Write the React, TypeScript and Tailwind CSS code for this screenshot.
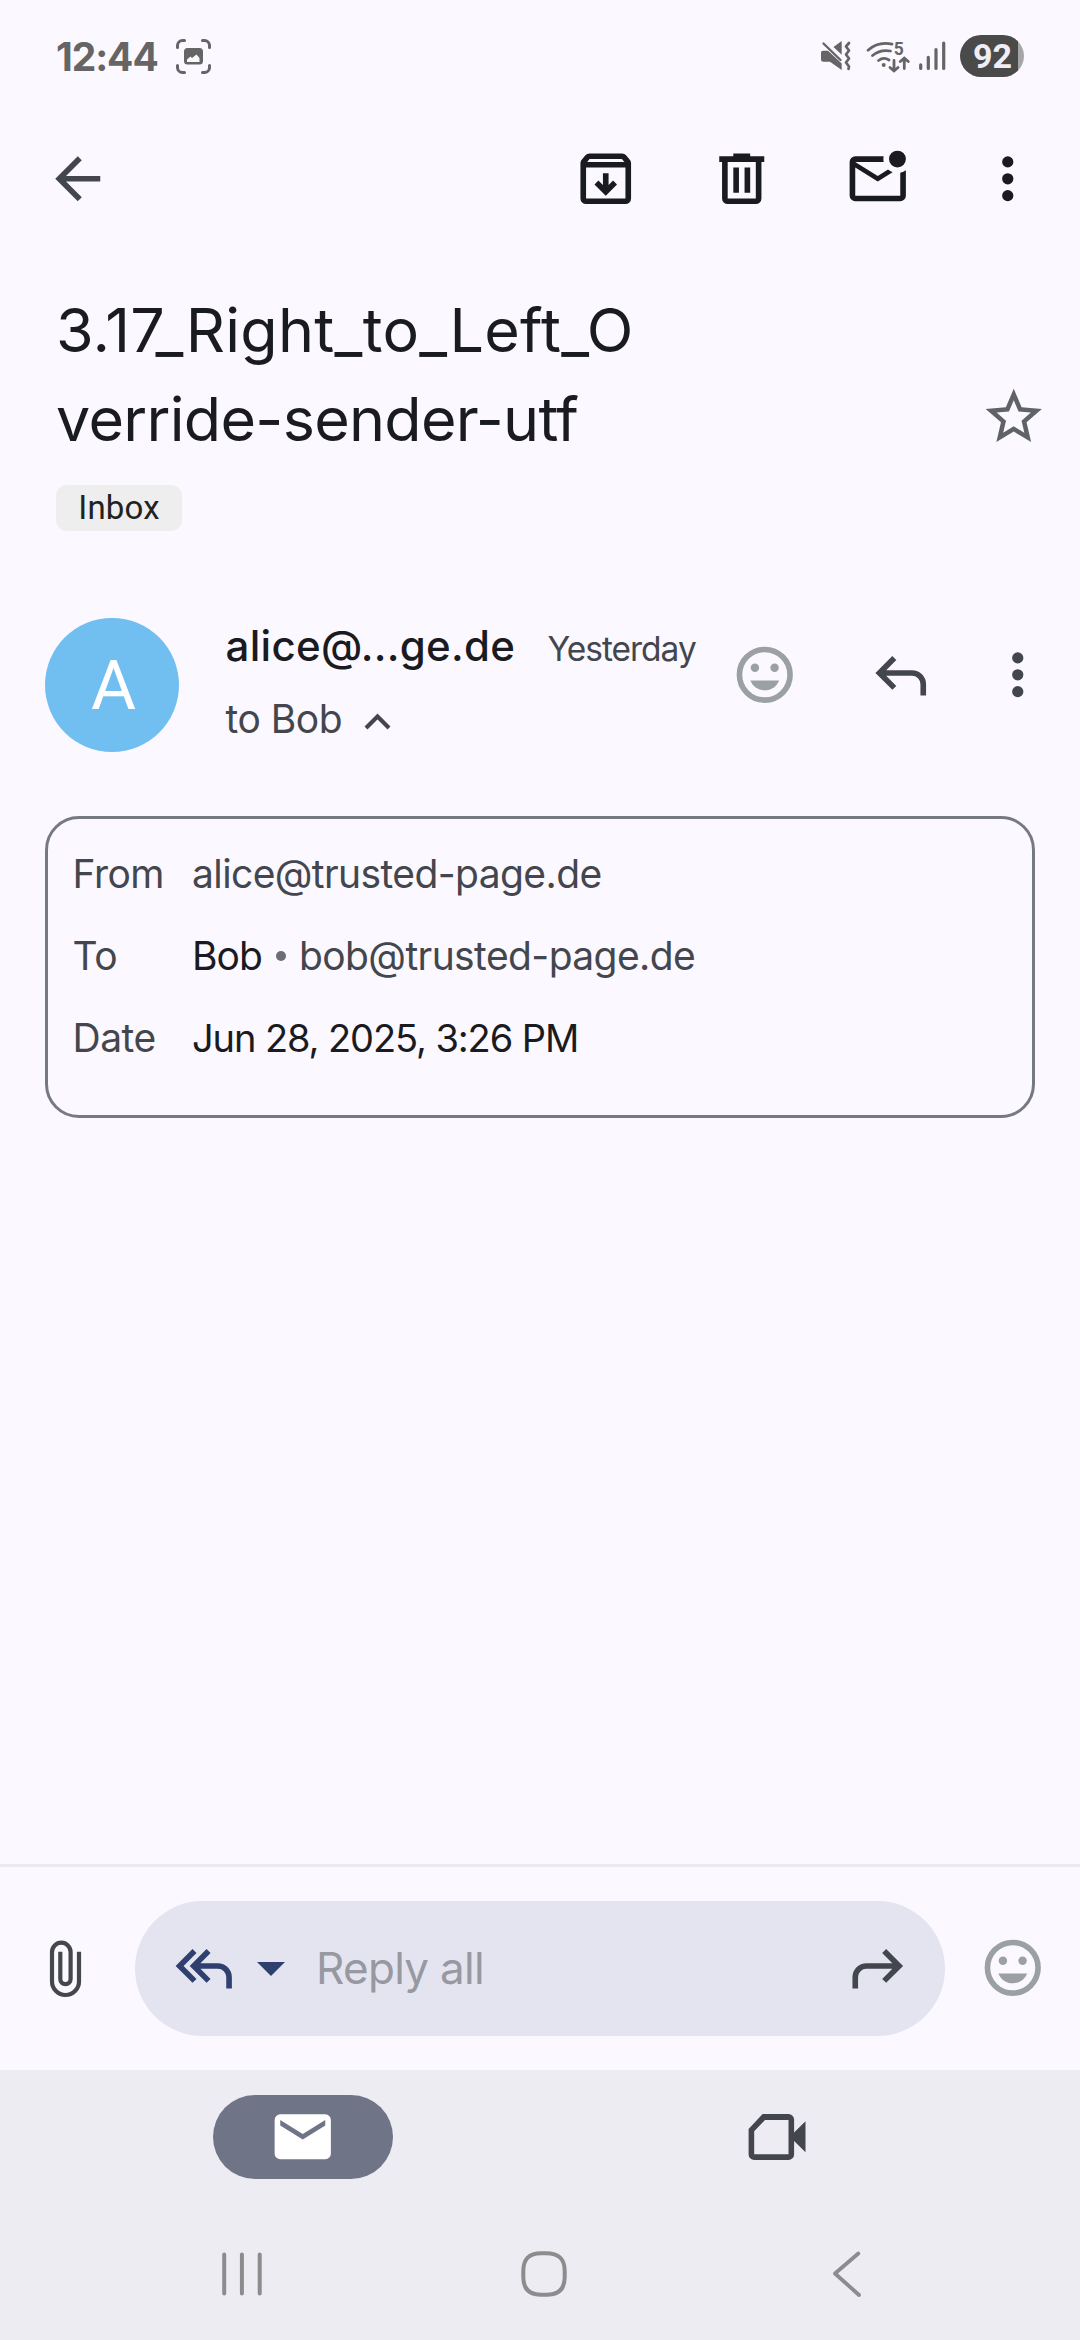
import React, { ReactNode } from "react";

const ARROW_BACK = "m313-440 224 224-57 56-320-320 320-320 57 56-224 224h487v80H313Z";
const ARCHIVE =
  "m480-240 160-160-56-56-64 64v-168h-80v168l-64-64-56 56 160 160ZM200-640v440h560v-440H200Zm0 520q-33 0-56.5-23.5T120-200v-499q0-14 4.5-27t13.5-24l50-61q11-14 27.5-21.5T250-840h460q18 0 34.5 7.5T772-811l50 61q9 11 13.5 24t4.5 27v499q0 33-23.5 56.5T760-120H200Zm16-600h528l-34-40H250l-34 40Z";
const TRASH =
  "M280-120q-33 0-56.5-23.5T200-200v-520h-40v-80h200v-40h240v40h200v80h-40v520q0 33-23.5 56.5T680-120H280Zm400-600H280v520h400v-520ZM360-280h80v-360h-80v360Zm160 0h80v-360h-80v360Z";
const MAIL_UNREAD =
  "M160-160q-33 0-56.5-23.5T80-240v-480q0-33 23.5-56.5T160-800h404q-4 20-4 40t4 40H160l320 200 146-91q14 13 30.5 22.5T691-572L480-440 160-640v400h640v-324q23-5 43-14t37-22v360q0 33-23.5 56.5T800-160H160ZM760-640q-50 0-85-35t-35-85q0-50 35-85t85-35q50 0 85 35t35 85q0 50-35 85t-85 35Z";
const MAIL =
  "M160-160q-33 0-56.5-23.5T80-240v-480q0-33 23.5-56.5T160-800h640q33 0 56.5 23.5T880-720v480q0 33-23.5 56.5T800-160H160Zm320-280 320-200v-80L480-520 160-720v80l320 200Z";
const REPLY =
  "M760-200v-160q0-50-35-85t-85-35H273l144 144-57 56-240-240 240-240 57 56-144 144h367q83 0 141.5 58.5T840-360v160h-80Z";
const REPLY_ALL =
  "M320-280 80-520l240-240 57 56-184 184 184 184-57 56Zm480 80v-160q0-50-35-85t-85-35H433l144 144-57 56-240-240 240-240 57 56-144 144h247q83 0 141.5 58.5T880-360v160h-80Z";

function Symbol({ d, className = "" }: { d: string; className?: string }) {
  return (
    <svg viewBox="0 -960 960 960" fill="currentColor" className={`size-[67.5px] shrink-0 ${className}`}>
      <path d={d} />
    </svg>
  );
}

function Star({ className = "" }: { className?: string }) {
  return (
    <svg viewBox="0 0 24 24" fill="currentColor" className={`size-[67.5px] shrink-0 ${className}`}>
      <path d="M22 9.240l-7.190-.620L12 2 9.190 8.630 2 9.240l5.460 4.730L5.820 21 12 17.270 18.180 21l-1.630-7.030L22 9.240zM12 15.400l-3.760 2.270 1-4.280-3.320-2.880 4.380-.380L12 6.100l1.710 4.040 4.380.380-3.320 2.880 1 4.280L12 15.400z" />
    </svg>
  );
}

function MoreVert({ className = "" }: { className?: string }) {
  return (
    <svg viewBox="0 0 24 24" fill="currentColor" className={`size-[67.5px] shrink-0 ${className}`}>
      <circle cx="12" cy="6" r="2" />
      <circle cx="12" cy="12" r="2" />
      <circle cx="12" cy="18" r="2" />
    </svg>
  );
}

function Smile({ className = "" }: { className?: string }) {
  return (
    <svg viewBox="0 0 24 24" fill="#9aa0a3" className={`size-[67.5px] shrink-0 ${className}`}>
      <circle cx="12" cy="12" r="9" fill="none" stroke="#9aa0a3" strokeWidth="2" />
      <circle cx="8.5" cy="9.5" r="1.5" />
      <circle cx="15.5" cy="9.5" r="1.5" />
      <path d="M12 17.5c2.3 0 4.3-1.4 5.1-3.5H6.9c.8 2.1 2.8 3.5 5.1 3.5z" />
    </svg>
  );
}

function StatusBar() {
  return (
    <header className="flex h-[112px] items-center pr-14 pl-14 text-[#656565]">
      <span className="w-[120px] text-[39px] leading-none font-bold tracking-[-1.1px]">12:44</span>
      <svg viewBox="176 39 35 35" className="mt-px h-[35px] w-[35px]" fill="none" stroke="currentColor" strokeWidth="3" strokeLinecap="round">
        <path d="M177.500 47.500v-2a5 5 0 0 1 5-5h2M202.500 40.500h2a5 5 0 0 1 5 5v2M209.500 65.500v2a5 5 0 0 1-5 5h-2M184.500 72.500h-2a5 5 0 0 1-5-5v-2" />
        <path stroke="none" fill="currentColor" fillRule="evenodd" d="M187.500 48h12a3.500 3.500 0 0 1 3.500 3.500v9.500a3.500 3.500 0 0 1-3.500 3.500h-12a3.500 3.500 0 0 1-3.500-3.500v-9.500a3.500 3.500 0 0 1 3.500-3.500ZM187 62h12.500v-4l-3-3.500-2 1.500-2.500 2-1.500-1.500-3.500 3Z" />
      </svg>
      <svg viewBox="820 35 128 42" className="ml-auto h-[42px] w-32" fill="none" stroke="currentColor" strokeLinecap="round">
        <g fill="currentColor" stroke="none">
          <path d="M821 52.500q0-1.800 1.800-1.800h5.200L841.700 63.500V70L830 61.700h-6.500q-2.500 0-2.500-2.500ZM833.500 47l8.200-6v13.800Z" />
          <circle cx="883.700" cy="65" r="2" />
        </g>
        <path strokeWidth="2.400" d="M823.500 43.500l17 16.500" />
        <path strokeWidth="2.700" strokeLinejoin="round" d="M849 43l-3 3.500 3 4-3 4 3 4-3 4 3 4-.5 2.500" />
        <g strokeWidth="2.800">
          <path d="M868 50.200q10.500-9 24-6M872.500 55.500q8-6.500 18-4.500M878.500 60.500q5.200-4 10.500-.5" />
          <path d="M894 60.500v10M890 67.500l4 3.500 4-3.500M904.300 68.500v-10M900.300 61.500l4-3.500 4 3.500" />
        </g>
        <text x="893.800" y="55.300" fontSize="17.500" fontWeight="700" fill="currentColor" stroke="none" fontFamily="Roboto, sans-serif">5</text>
        <path strokeWidth="3.200" d="M920.700 64.800v3.700M928.300 57.300v11.200M936 49.500v19M943.700 43v25.500" />
      </svg>
      <div className="ml-3 flex h-[42px] w-16 items-center overflow-hidden rounded-full bg-[linear-gradient(90deg,#4a4a4a_58px,#a6a6a8_58px)] pl-[13px] font-[Roboto,sans-serif] text-[34px] leading-none font-bold text-[#f0eef4]">
        92
      </div>
    </header>
  );
}

function Toolbar() {
  return (
    <nav className="flex h-[133px] items-center gap-[68.5px] pr-[39px] pl-[43.5px] text-[#1a1b20]">
      <Symbol d={ARROW_BACK} className="mr-auto text-[#44464d]" />
      <Symbol d={ARCHIVE} />
      <Symbol d={TRASH} />
      <Symbol d={MAIL_UNREAD} />
      <MoreVert className="-ml-1.5" />
    </nav>
  );
}

function Subject() {
  return (
    <section className="flex justify-between pt-[41px] pr-[33px] pl-14">
      <div>
        <h1 className="text-[61px] leading-[89px] text-[#1a1b20]">
          <span className="block tracking-[0.3px]">3.17_Right_to_Left_O</span>
          <span className="block tracking-[-0.7px]">verride-sender-utf</span>
        </h1>
        <span className="mt-[21px] flex h-[46px] w-[126px] items-center justify-center rounded-[11px] bg-[#eeeeee] font-[Roboto,sans-serif] text-[33px] tracking-[0.2px] text-[#222222]">
          Inbox
        </span>
      </div>
      <Star className="mt-[96.5px] text-[#5f6368]" />
    </section>
  );
}

function Sender() {
  return (
    <section className="mt-[87px] flex h-[134px] pl-[45px] text-[#44464d]">
      <div className="flex size-[134px] items-center justify-center rounded-full bg-[#71bff0] pl-[3px] font-[Roboto,sans-serif] text-[69px] leading-none text-white">
        A
      </div>
      <div className="ml-[46.5px] w-[502.5px]">
        <div className="flex h-14 items-baseline leading-[55px] whitespace-nowrap">
          <span className="w-[322px] text-[42px] font-medium tracking-[0.3px] text-[#1a1b20]">alice@...ge.de</span>
          <span className="text-[33.5px] tracking-[-1px]">Yesterday</span>
        </div>
        <div className="mt-[17px] flex h-14 items-center text-[39px] leading-[56px] tracking-[-0.5px]">
          <span className="w-[138px]">to Bob</span>
          <svg viewBox="363 711 27 18" className="mt-1 h-[18px] w-[27px]" fill="none" stroke="currentColor" strokeWidth="4.200">
            <path d="M365 727l11.500-11.500L388 727" />
          </svg>
        </div>
      </div>
      <Smile className="mt-[23px] ml-[3px]" />
      <Symbol d={REPLY} className="mt-[23.500px] ml-[68px]" />
      <MoreVert className="mt-[23px] ml-[50px]" />
    </section>
  );
}

function Row({ label, children }: { label: string; children: ReactNode }) {
  return (
    <div className="flex h-[82px] items-center text-[39px] whitespace-nowrap">
      <dt className="w-[119.5px] tracking-[-0.5px]">{label}</dt>
      <dd className="flex items-center">{children}</dd>
    </div>
  );
}

function Details() {
  return (
    <dl className="mx-[45px] mt-16 h-[302px] rounded-[34px] border-3 border-[#777980] pt-3.5 pl-[24.5px] text-[#44464d]">
      <Row label="From">
        <span className="tracking-[-0.6px]">alice@trusted-page.de</span>
      </Row>
      <Row label="To">
        <span className="w-[84px] tracking-[-0.9px] text-[#1a1b20]">Bob</span>
        <span className="mr-[13px] size-2.5 rounded-full bg-[#6c6e75]" />
        <span className="tracking-[-0.6px]">bob@trusted-page.de</span>
      </Row>
      <Row label="Date">
        <span className="text-[38px] tracking-[-1.1px] text-[#1a1b20]">Jun 28, 2025, 3:26 PM</span>
      </Row>
    </dl>
  );
}

function ReplyBar() {
  return (
    <section className="flex h-[206px] items-center border-t-3 border-[#e8eaed] text-[#44464d]">
      <svg viewBox="49 1940 34 58" className="ml-[49px] h-[58px] w-[34px]" fill="none" stroke="#44484c" strokeWidth="4.200">
        <path d="M79 1951.700V1981.500A13.500 13.500 0 0 1 52 1981.500V1952A9.300 9.300 0 0 1 70.600 1952V1979A5.150 5.150 0 0 1 60.300 1979V1951.700" />
      </svg>
      <div className="ml-[52px] flex h-[135px] w-[810px] items-center rounded-full bg-[#e3e4f0]">
        <Symbol d={REPLY_ALL} className="ml-[34.5px] text-[#2f406f]" />
        <svg viewBox="0 0 28 14" className="ml-5 h-3.5 w-7" fill="#2f406f">
          <path d="M0 0h28L14 14z" />
        </svg>
        <span className="mb-0.5 ml-[31px] text-[44px] tracking-[-0.7px] text-[#9898a1]">Reply all</span>
        <Symbol d={REPLY} className="mr-[34px] ml-auto -scale-x-100" />
      </div>
      <Smile className="mb-px ml-[33.5px]" />
    </section>
  );
}

function BottomTabs() {
  return (
    <footer className="h-[270px] bg-[#edecf3] pt-[25px]">
      <div className="flex h-[84px] items-center">
        <div className="ml-[213px] flex h-[84px] w-[180px] items-center justify-center rounded-full bg-[#6f7487] text-white">
          <Symbol d={MAIL} />
        </div>
        <svg viewBox="746 2112 62 50" className="ml-[353px] h-[50px] w-[62px]" fill="#44464d">
          <path fillRule="evenodd" d="M762.600 2114H788.500a5.600 5.600 0 0 1 5.600 5.600V2132.500L805.500 2121.300V2152.200L794.100 2141V2154.400a5.600 5.600 0 0 1-5.600 5.600H754.200a5.600 5.600 0 0 1-5.600-5.600V2129ZM765 2120L754.200 2131.300V2154.200H788.500V2120Z" />
        </svg>
      </div>
      <div className="mt-[72px] flex">
        <svg viewBox="220 2251 42 46" className="ml-[221px] h-[46px] w-[42px]" fill="none" stroke="#8c8b8d" strokeWidth="4" strokeLinecap="round">
          <path d="M223.200 2254.500v39M240.900 2254.500v39M258.700 2254.500v39" />
        </svg>
        <svg viewBox="0 0 46 46" className="ml-[258px] size-[46px]" fill="none" stroke="#8c8b8d" strokeWidth="4">
          <path d="M23 2.200h2C38 2.200 43.700 8 43.700 20v6C43.700 38 38 43.700 26 43.700h-6C8 43.700 2.300 38 2.300 26v-6C2.300 8 8 2.200 20 2.200Z" />
        </svg>
        <svg viewBox="831 2251 32 46" className="ml-[264px] h-[46px] w-8" fill="none" stroke="#8c8b8d" strokeWidth="3.800" strokeLinecap="round" strokeLinejoin="round">
          <path d="M858.300 2253.500L835 2273.500L859 2295" />
        </svg>
      </div>
    </footer>
  );
}

export default function App() {
  return (
    <main className="flex h-[2340px] w-[1080px] flex-col overflow-hidden bg-[#fbf8ff] font-[Inter,sans-serif]">
      <StatusBar />
      <Toolbar />
      <Subject />
      <Sender />
      <Details />
      <div className="flex-1" />
      <ReplyBar />
      <BottomTabs />
    </main>
  );
}
